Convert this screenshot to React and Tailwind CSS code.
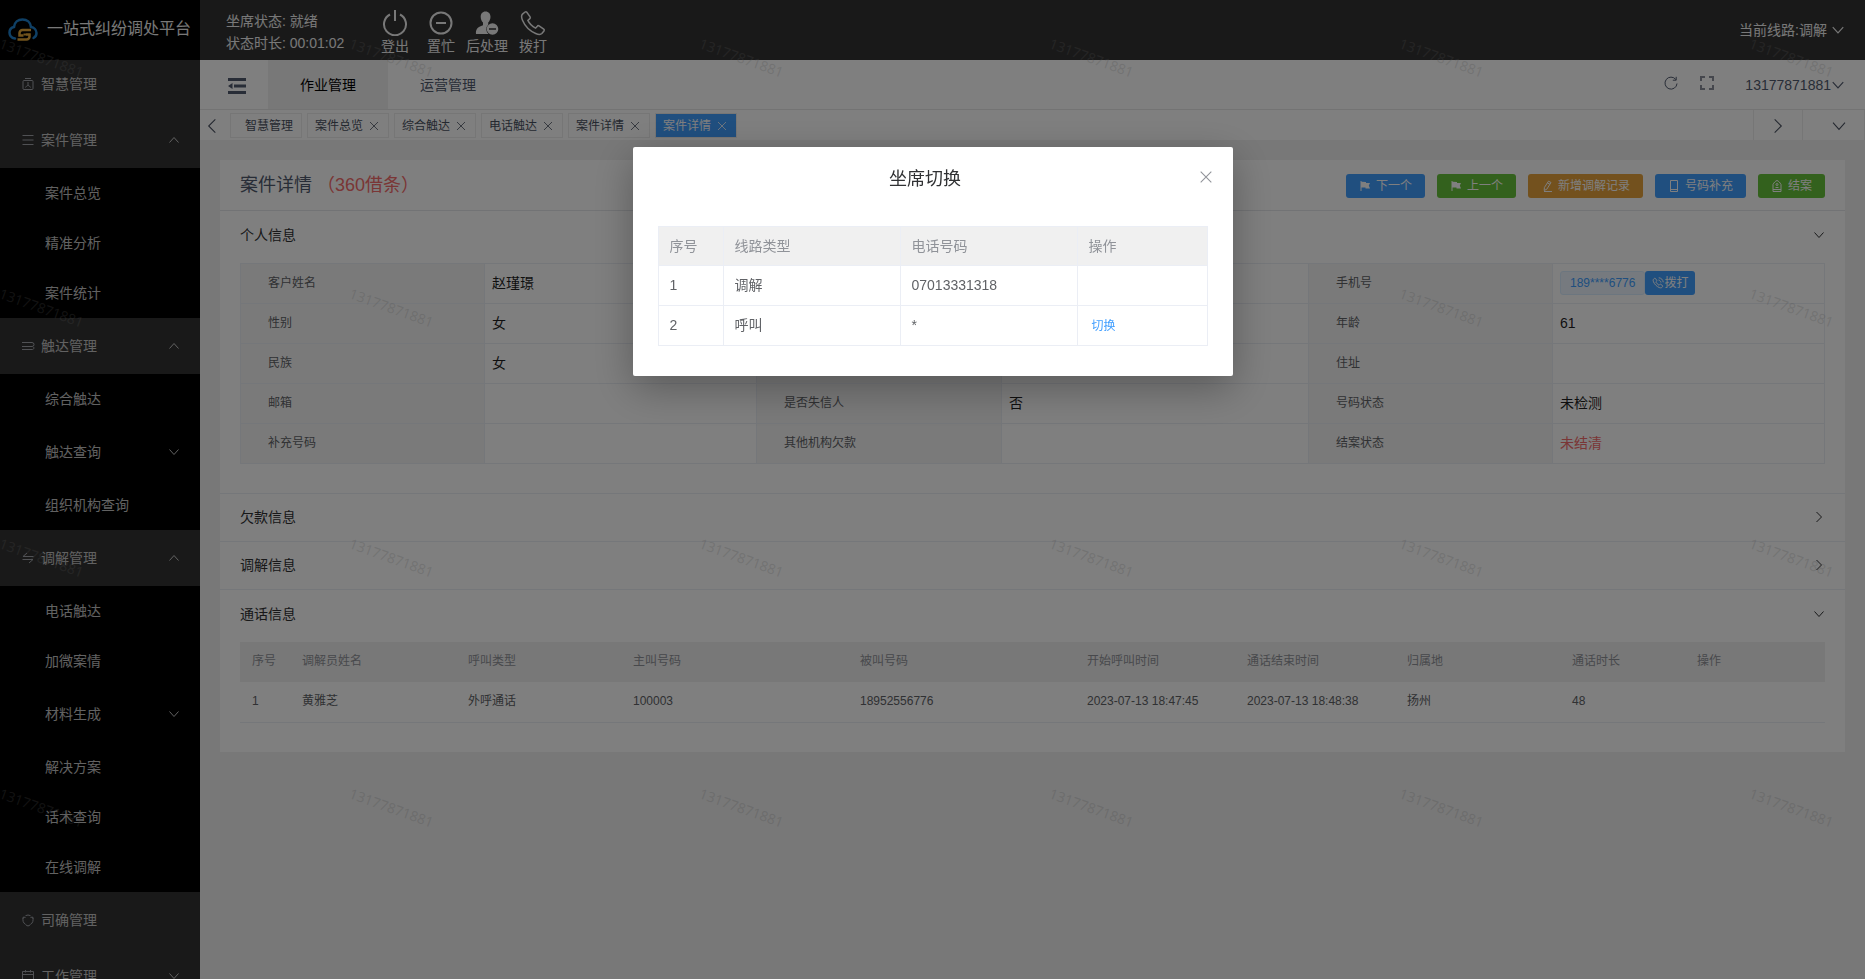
import React from 'react';

const Svg = ({ className = '', children, box = 24, width = 2 }) => (
  <svg
    viewBox={`0 0 ${box} ${box}`}
    fill="none"
    stroke="currentColor"
    strokeWidth={width}
    className={`shrink-0 ${className}`}
    aria-hidden="true"
  >
    {children}
  </svg>
);

const Chevron = ({ dir = 'down', className = 'size-3', width = 1 }) => {
  const d = {
    down: 'M1.5 3.5 6 8.5l4.5-5',
    up: 'M1.5 8.5 6 3.5l4.5 5',
    left: 'M8.5 1 3.5 6l5 5',
    right: 'M3.5 1 8.5 6l-5 5',
  }[dir];
  return (
    <Svg box={12} width={width} className={className}>
      <path d={d} />
    </Svg>
  );
};

const Cross = ({ className = 'size-3', width = 1 }) => (
  <Svg box={12} width={width} className={className}>
    <path d="M2 2l8 8M10 2l-8 8" />
  </Svg>
);

const Logo = () => (
  <svg viewBox="0 0 60 46" className="h-[23px] w-[30px] shrink-0" fill="none" aria-hidden="true">
    <path
      d="M14 41C7 40 3 35 3 29c0-6 4-10 9-11C13 9 20 3 29 3c9 0 16 6 17 15 6 1 11 6 11 12 0 4-2 8-6 10"
      stroke="#1e80cc"
      strokeWidth="5"
      strokeLinecap="round"
    />
    <path d="M46 24H29a6 6 0 0 0-6 6v5h8" stroke="#e6a93a" strokeWidth="5" />
    <path d="M36 33h7v4a6 6 0 0 1-6 6H19" stroke="#e6a93a" strokeWidth="5" />
    <path d="M31 33h5" stroke="#e6a93a" strokeWidth="4" />
  </svg>
);

const phonePath =
  'M5.2 2.6 3 4.4c-1 1-.9 3.100 0 5.300 2 4.800 6.500 9.300 11.300 11.300 2.200.9 4.300 1 5.300 0l1.800-2.200c.4-.5.3-1.100-.2-1.500l-4-2.800c-.5-.3-1.100-.3-1.500.2l-1.500 1.700c-2.500-1.200-5.400-4.100-6.600-6.600l1.700-1.500c.5-.4.5-1 .2-1.500L6.700 2.800c-.4-.5-1-.6-1.500-.2z';

const PowerIcon = () => (
  <Svg className="size-[26px]" box={26} width={2}>
    <path d="M8 4.500A11 11 0 1 0 18 4.500M13 0v11" />
  </Svg>
);
const MinusIcon = () => (
  <Svg className="size-[26px]" box={26} width={2}>
    <circle cx="13" cy="13" r="10.500" />
    <path d="M8 13h10" />
  </Svg>
);
const UserMinusIcon = () => (
  <Svg className="size-[26px]" box={26} width={0}>
    <path
      fill="currentColor"
      d="M11.500 1.500c3.200 0 5 2.300 5 5.300 0 2.400-1 4.500-2.300 5.700v2.300A6.200 6.200 0 0 0 14.500 24H2c-.5-4.500 1.500-7 7-8.700v-2.800C7.600 11.300 6.700 9.200 6.700 6.800c0-3 1.700-5.300 4.800-5.300z"
    />
    <path fill="currentColor" fillRule="evenodd" d="M18.500 13.200a5.800 5.800 0 1 1 0 11.600 5.800 5.800 0 0 1 0-11.600zM15 18.200v1.600h7v-1.600z" />
  </Svg>
);
const PhoneIcon = () => (
  <Svg className="size-[28px]" width={1.3}>
    <path d={phonePath} />
  </Svg>
);

const agentActions = [
  { label: '登出', Icon: PowerIcon },
  { label: '置忙', Icon: MinusIcon },
  { label: '后处理', Icon: UserMinusIcon },
  { label: '拨打', Icon: PhoneIcon },
];

const menuIcons = {
  wisdom: (
    <>
      <path d="M4 1.500h6M3 3.500h8a1 1 0 0 1 1 1v7a1 1 0 0 1-1 1H3a1 1 0 0 1-1-1v-7a1 1 0 0 1 1-1z" />
      <path d="M7 5v3.500M4.500 10.500C5 9.500 6 8.500 7 8.500s2 1 2.500 2" />
    </>
  ),
  lines: <path d="M1.500 2.500h11M1.500 7h11M1.500 11.500h11" />,
  reach: <path d="M1 3.500h10a2 2 0 0 1 0 4H1M1 10.500h10.500a1.500 1.500 0 0 0 1-2.500" />,
  mediate: <path d="M6 2 2 5.500h10.500M1.500 8.500H12L8 12" />,
  cycle: (
    <>
      <path d="M4.500 2.700a5.200 5.200 0 0 1 5 0M11.500 4.500a5.200 5.200 0 0 1-2.200 7M2.500 4.500a5.200 5.200 0 0 0 2.200 7" />
      <path d="M1.500 5.500 2.500 4l2 .5M12.500 5.500 11.500 4l-2 .5M5 12l2 1 2-1" />
    </>
  ),
  calendar: <path d="M1.500 2.500h11v10.500h-11zM1.500 5.500h11M4.500 1v2.500M9.500 1v2.500" />,
};

const menu = [
  { label: '智慧管理', icon: 'wisdom' },
  {
    label: '案件管理',
    icon: 'lines',
    open: true,
    children: [{ label: '案件总览' }, { label: '精准分析' }, { label: '案件统计' }],
  },
  {
    label: '触达管理',
    icon: 'reach',
    open: true,
    children: [{ label: '综合触达' }, { label: '触达查询', nested: true }, { label: '组织机构查询' }],
  },
  {
    label: '调解管理',
    icon: 'mediate',
    open: true,
    children: [
      { label: '电话触达' },
      { label: '加微案情' },
      { label: '材料生成', nested: true },
      { label: '解决方案' },
      { label: '话术查询' },
      { label: '在线调解' },
    ],
  },
  { label: '司确管理', icon: 'cycle' },
  { label: '工作管理', icon: 'calendar', closed: true },
];

const Sidebar = () => (
  <aside className="flex w-[200px] shrink-0 flex-col overflow-hidden bg-[#333] text-sm text-[#c4c4c4]">
    <div className="z-10 flex h-[60px] shrink-0 items-center gap-[9px] bg-black pb-0.5 pl-2 text-base whitespace-nowrap text-[#f0f0f0]">
      <Logo />
      <span>一站式纠纷调处平台</span>
    </div>
    <nav className="-mt-1">
      <ul>
        {menu.map((m) => (
          <li key={m.label}>
            <button type="button" className="flex h-14 w-full items-center pr-5 pl-[21px] text-left">
              <Svg box={14} width={1} className="mr-1.5 size-3.5 text-[#a0a3a9]">
                {menuIcons[m.icon]}
              </Svg>
              <span className="grow">{m.label}</span>
              {(m.open || m.closed) && <Chevron dir={m.open ? 'up' : 'down'} />}
            </button>
            {m.children && (
              <ul className="bg-black">
                {m.children.map((c) => (
                  <li key={c.label}>
                    {c.nested ? (
                      <button type="button" className="flex h-14 w-full items-center justify-between pr-5 pl-[45px]">
                        {c.label}
                        <Chevron />
                      </button>
                    ) : (
                      <a href="#" className="flex h-[50px] items-center pl-[45px]">
                        {c.label}
                      </a>
                    )}
                  </li>
                ))}
              </ul>
            )}
          </li>
        ))}
      </ul>
    </nav>
  </aside>
);

const TopBar = () => (
  <header className="flex h-[60px] shrink-0 items-center bg-[#333] pr-5 pl-[26px] text-sm text-[#f0f0f0]">
    <div className="w-[146px] pt-[3px] leading-[22px] whitespace-nowrap">
      <p>坐席状态: 就绪</p>
      <p>状态时长: 00:01:02</p>
    </div>
    <div className="flex pt-[3px]">
      {agentActions.map(({ label, Icon }) => (
        <button key={label} type="button" className="flex w-[46px] flex-col items-center whitespace-nowrap">
          <span className="flex h-7 items-center">
            <Icon />
          </span>
          <span className="leading-[18px]">{label}</span>
        </button>
      ))}
    </div>
    <button type="button" className="ml-auto flex items-center gap-1">
      当前线路:调解
      <Chevron className="size-[14px]" />
    </button>
  </header>
);

const NavBar = () => (
  <div className="flex h-[50px] shrink-0 items-center border-b border-[#e6e6e6] bg-white pr-5 text-sm text-[#515a6e]">
    <button type="button" aria-label="收起菜单" className="flex h-full w-[68px] items-center justify-start pt-0.5 pl-7">
      <svg viewBox="0 0 18 16" className="h-4 w-[18px]" fill="currentColor" aria-hidden="true">
        <path d="M0 0h18v3H0zM6 6.500h12v3H6zM0 13h18v3H0zM0 8l4.500-3v6z" />
      </svg>
    </button>
    <nav className="flex h-full">
      <a href="#" className="flex w-[120px] items-center justify-center bg-[#f0f0f0] text-black">
        作业管理
      </a>
      <a href="#" className="flex w-[120px] items-center justify-center">
        运营管理
      </a>
    </nav>
    <div className="ml-auto flex items-center">
      <button type="button" aria-label="刷新" className="pb-[3px]">
        <Svg box={14} width={1} className="size-[14px]">
          <path d="M11.800 3.500A6 6 0 1 0 13 7.500M12.200.8v3.400H8.800" />
        </Svg>
      </button>
      <button type="button" aria-label="全屏" className="ml-[21px] pb-[3px]">
        <Svg box={16} width={2} className="size-4 text-[#8a8f9b]">
          <path d="M2 6V2h4M10 2h4v4M14 10v4h-4M6 14H2v-4" />
        </Svg>
      </button>
      <button type="button" className="ml-[30px] flex items-center">
        13177871881
        <Chevron className="size-[14px]" />
      </button>
    </div>
  </div>
);

const tabs = [
  { label: '智慧管理', fixed: true },
  { label: '案件总览' },
  { label: '综合触达' },
  { label: '电话触达' },
  { label: '案件详情' },
  { label: '案件详情', active: true },
];

const TabBar = () => (
  <div className="flex h-[30px] shrink-0 items-center bg-white text-xs text-[#495060]">
    <button type="button" aria-label="向左" className="flex w-[30px] justify-start pt-px pl-1">
      <Chevron dir="left" className="size-4" width={0.8} />
    </button>
    <div className="flex grow gap-[5px] pt-px">
      {tabs.map((t, i) => (
        <span
          key={i}
          className={`flex h-[25px] items-center gap-[5px] border border-[#ececec] ${
            t.active ? 'bg-[#409eff] text-white' : 'bg-white'
          } ${t.fixed ? 'pr-2 pl-3.5' : 'pr-2 pl-[7px]'}`}
        >
          <a href="#">{t.label}</a>
          {!t.fixed && (
            <button type="button" aria-label={`关闭${t.label}`}>
              <Cross width={0.8} />
            </button>
          )}
        </span>
      ))}
    </div>
    <button type="button" aria-label="向右" className="flex h-full w-[49px] items-center justify-center border-l border-[#ececec] pt-px">
      <Chevron dir="right" className="size-4" width={0.8} />
    </button>
    <button type="button" aria-label="更多标签" className="flex h-full w-[63px] items-center justify-center border-x border-[#ececec] pt-px pl-2.5">
      <Chevron className="size-4" width={0.8} />
    </button>
  </div>
);

const buttonIcons = {
  flag: <path fill="currentColor" d="M1.500 1h1v.8l4.500.3v1h4L9.800 5.500l1.200 3H6.500v-1h-4V11h-1z" stroke="none" />,
  edit: <path d="M7.500 1.200 10 2.500 5.800 9.200 3.200 10.500l.2-3zM3 11.500h8M6.500 3l2.500 1.300" />,
  phone: <path d="M2.500.5h7v11h-7zM2.500 9.500h7" />,
  finish: <path d="M2 11.500v-7C3 2.500 4.500 1 6 .5 7.500 1 9 2.500 10 4.500v7zM2 9.500h8M6 3.500a1 1 0 1 1 0 2 1 1 0 0 1 0-2M4.500 7.500h3" />,
};

const actions = [
  { label: '下一个', icon: 'flag', tone: 'bg-[#409eff]' },
  { label: '上一个', icon: 'flag', tone: 'bg-[#67c23a]' },
  { label: '新增调解记录', icon: 'edit', tone: 'bg-[#e6a23c]' },
  { label: '号码补充', icon: 'phone', tone: 'bg-[#409eff]' },
  { label: '结案', icon: 'finish', tone: 'bg-[#67c23a]' },
];

const Section = ({ title, open, children }) => (
  <section className="border-b border-[#ebeef5] last:border-b-0">
    <h2>
      <button
        type="button"
        aria-expanded={!!open}
        className={`flex w-full items-center justify-between px-5 pb-px text-sm text-[#303133] ${open ? 'h-12' : 'h-[47px]'}`}
      >
        {title}
        <Chevron dir={open ? 'down' : 'right'} />
      </button>
    </h2>
    {open && <div className="px-5 pt-1 pb-[29px]">{children}</div>}
  </section>
);

const PhoneCell = () => (
  <div className="flex items-center">
    <span className="flex h-6 items-center rounded-[3px] border border-[#d9ecff] bg-[#ecf5ff] px-[9px] text-xs text-[#409eff]">
      189****6776
    </span>
    <button type="button" className="flex h-6 items-center rounded-[3px] bg-[#409eff] px-[7px] text-xs text-white">
      <Svg className="size-3" width={2}>
        <path d={phonePath} />
        <path d="M13 6c2.500.5 4.500 2.500 5 5M13.500 1.500c5 .5 8.500 4 9 9" />
      </Svg>
      拨打
    </button>
  </div>
);

const profile = [
  [['客户姓名', '赵瑾璟'], ['', ''], ['手机号', <PhoneCell />]],
  [['性别', '女'], ['', ''], ['年龄', '61']],
  [['民族', '女'], ['', ''], ['住址', '']],
  [['邮箱', ''], ['是否失信人', '否'], ['号码状态', '未检测']],
  [['补充号码', ''], ['其他机构欠款', ''], ['结案状态', <span className="text-[#f56c6c]">未结清</span>]],
];

const ProfileTable = () => (
  <table className="w-full table-fixed border-collapse text-left">
    <colgroup>
      <col className="w-[244px]" />
      <col />
      <col className="w-[245px]" />
      <col className="w-[307px]" />
      <col className="w-[244px]" />
      <col />
    </colgroup>
    <tbody>
      {profile.map((row, i) => (
        <tr key={i} className="h-10">
          {row.map(([label, value], j) => (
            <React.Fragment key={j}>
              <th className="border border-[#ebeef5] bg-[#f5f5f5] pb-0.5 pl-[27px] text-xs font-normal text-[#606266]">{label}</th>
              <td className="border border-[#ebeef5] pb-0.5 pl-[7px] text-sm text-[#1f1f1f]">{value}</td>
            </React.Fragment>
          ))}
        </tr>
      ))}
    </tbody>
  </table>
);

const callColumns = [
  ['序号', '1', 'w-[50px]'],
  ['调解员姓名', '黄雅芝', 'w-[166px]'],
  ['呼叫类型', '外呼通话', 'w-[165px]'],
  ['主叫号码', '100003', ''],
  ['被叫号码', '18952556776', ''],
  ['开始呼叫时间', '2023-07-13 18:47:45', 'w-[160px]'],
  ['通话结束时间', '2023-07-13 18:48:38', 'w-[160px]'],
  ['归属地', '扬州', 'w-[165px]'],
  ['通话时长', '48', 'w-[125px]'],
  ['操作', '', 'w-[140px]'],
];

const CallTable = () => (
  <table className="w-full table-fixed border-collapse text-left text-xs whitespace-nowrap text-[#606266]">
    <thead>
      <tr className="h-10 bg-[#f0f0f0] text-[#909399]">
        {callColumns.map(([h, , w]) => (
          <th key={h} className={`pb-0.5 pl-3 font-normal ${w}`}>
            {h}
          </th>
        ))}
      </tr>
    </thead>
    <tbody>
      <tr className="h-10 border-b border-[#ebeef5]">
        {callColumns.map(([h, v]) => (
          <td key={h} className="pb-0.5 pl-3">
            {v}
          </td>
        ))}
      </tr>
    </tbody>
  </table>
);

const CaseDetail = () => (
  <main className="grow overflow-hidden bg-[#f0f0f0] p-5">
    <article className="bg-white">
      <div className="flex h-[51px] items-center justify-between border-b border-[#e4e6ea] px-5">
        <h1 className="text-lg text-[#515a6e]">
          案件详情 <span className="text-[#f56c6c]">（360借条）</span>
        </h1>
        <div className="flex gap-3 pt-0.5">
          {actions.map((a) => (
            <button
              key={a.label}
              type="button"
              className={`flex h-6 items-center gap-[5px] rounded-[3px] px-[13px] text-xs text-white ${a.tone}`}
            >
              <Svg box={12} width={1} className="size-3">
                {buttonIcons[a.icon]}
              </Svg>
              {a.label}
            </button>
          ))}
        </div>
      </div>
      <Section title="个人信息" open>
        <ProfileTable />
      </Section>
      <Section title="欠款信息" />
      <Section title="调解信息" />
      <Section title="通话信息" open>
        <CallTable />
      </Section>
    </article>
  </main>
);

const Watermark = () => (
  <div className="pointer-events-none absolute inset-0 z-20 grid auto-rows-[250px] grid-cols-[repeat(6,350px)] overflow-hidden" aria-hidden="true">
    {Array.from({ length: 24 }, (_, i) => (
      <div key={i} className="pt-[33px]">
        <span className="block w-max origin-left rotate-20 font-['Noto_Sans',sans-serif] text-sm leading-5 text-[rgb(150,150,150)]/25">
          13177871881
        </span>
      </div>
    ))}
  </div>
);

const lines = [
  ['1', '调解', '07013331318', false],
  ['2', '呼叫', '*', true],
];

const SwitchDialog = () => (
  <div className="fixed inset-0 z-30 bg-black/50">
    <div
      role="dialog"
      aria-modal="true"
      aria-labelledby="switch-title"
      className="mx-auto mt-[15vh] w-[600px] rounded-[2px] bg-white shadow-[0_12px_40px_rgba(0,0,0,0.3)]"
    >
      <div className="flex h-[54px] items-start pt-5 pr-[19px] pl-5">
        <h2 id="switch-title" className="grow text-center text-lg leading-6 text-[#303133]">
          坐席切换
        </h2>
        <button type="button" aria-label="关闭" className="pt-0.5 text-[#909399]">
          <Cross className="size-4" width={0.8} />
        </button>
      </div>
      <div className="px-[25px] pt-[25px] pb-[30px]">
        <table className="w-full table-fixed border-collapse text-left text-sm text-[#606266]">
          <thead>
            <tr className="h-[39px] bg-[#f0f0f0] text-[#909399]">
              <th className="w-[65px] border border-[#ebeef5] pl-[11px] font-normal">序号</th>
              <th className="border border-[#ebeef5] pl-[11px] font-normal">线路类型</th>
              <th className="border border-[#ebeef5] pl-[11px] font-normal">电话号码</th>
              <th className="w-[130px] border border-[#ebeef5] pl-[11px] font-normal">操作</th>
            </tr>
          </thead>
          <tbody>
            {lines.map(([no, type, phone, can]) => (
              <tr key={no} className="h-10">
                <td className="border border-[#ebeef5] pl-[11px]">{no}</td>
                <td className="border border-[#ebeef5] pl-[11px]">{type}</td>
                <td className="border border-[#ebeef5] pl-[11px]">{phone}</td>
                <td className="border border-[#ebeef5] pl-3.5">
                  {can && (
                    <button type="button" className="text-xs text-[#409eff]">
                      切换
                    </button>
                  )}
                </td>
              </tr>
            ))}
          </tbody>
        </table>
      </div>
    </div>
  </div>
);

export default function App() {
  return (
    <div className="relative flex h-screen overflow-hidden font-['Liberation_Sans','Noto_Sans_CJK_SC',sans-serif]">
      <Sidebar />
      <div className="flex min-w-0 grow flex-col">
        <TopBar />
        <NavBar />
        <TabBar />
        <CaseDetail />
      </div>
      <Watermark />
      <SwitchDialog />
    </div>
  );
}
